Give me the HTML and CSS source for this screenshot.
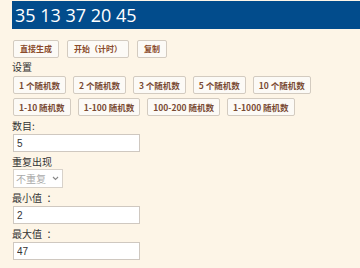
FILE: index.html
```html
<!DOCTYPE html>
<html>
	<head>
		<title>随机数生成</title>
		<link rel="stylesheet" href="styles.css">
	</head>
	<body>
		<div id="result">35 13 37 20 45</div>

		<div class="tools">
			<button class="btn">直接生成</button>
			<button class="btn">开始（计时）</button>
			<button class="btn">复制</button>
		</div>

		<div class="label">设置</div>
		<div class="presets">
			<button class="btn">1 个随机数</button>
			<button class="btn">2 个随机数</button>
			<button class="btn">3 个随机数</button>
			<button class="btn">5 个随机数</button>
			<button class="btn">10 个随机数</button>
		</div>
		<div class="presets">
			<button class="btn">1-10 随机数</button>
			<button class="btn">1-100 随机数</button>
			<button class="btn">100-200 随机数</button>
			<button class="btn">1-1000 随机数</button>
		</div>

		<div class="label">数目:</div>
		<input class="field" type="text" value="5">

		<div class="label">重复出现</div>
		<div class="select"><span>不重复</span>
			<svg width="7" height="5" viewBox="0 0 7 5"><path d="M1 1 L3.5 3.5 L6 1" fill="none" stroke="#888" stroke-width="1.2"/></svg>
		</div>

		<div class="label">最小值 &nbsp;：</div>
		<input class="field" type="text" value="2">

		<div class="label">最大值 &nbsp;：</div>
		<input class="field" type="text" value="47">
	</body>
</html>
```

FILE: styles.css
```css
body {
	margin: 0;
	padding: 1px 0 0 12px;
	background-color: #fdf5e7;
	font-family: "Noto Sans CJK SC", "Open Sans", sans-serif;
	color: #333;
}

/* big number bar on top */
#result {
	background-color: #024c8c;
	color: white;
	font-family: "Open Sans", "Noto Sans CJK SC", sans-serif;
	font-size: 18px;
	line-height: 28px;
	height: 28px;
	padding-left: 3px;
}

.tools {
	display: flex;
	gap: 8px;
	padding: 11px 0 0 1px;
}

.presets {
	display: flex;
	gap: 7px;
	padding: 3px 0 1px 1px;
}

.btn {
	font-family: "Noto Sans CJK SC", sans-serif;
	font-size: 8px;
	font-weight: bold;
	color: #8a4a2a;
	background-color: #fcfaf6;
	border: 1px solid #d3cbc0;
	border-radius: 2px;
	height: 18px;
	padding: 0 6px;
	line-height: 16px;
}

.presets .btn {
	color: #7a4a33;
	font-size: 8.5px;
	padding: 0 5px;
}

.label {
	font-size: 10px;
	line-height: 13px;
	margin-top: 2px;
}

.field {
	display: block;
	box-sizing: border-box;
	width: 127px;
	height: 18px;
	margin: 2px 0 3px 1px;
	padding: 0 3px;
	border: 1px solid #cfc8c0;
	background: white;
	font-family: "Liberation Sans", sans-serif;
	font-size: 10px;
	color: #333;
	outline: none;
}

.select {
	display: flex;
	align-items: center;
	justify-content: space-between;
	box-sizing: border-box;
	width: 50px;
	height: 19px;
	margin: 1px 0 3px 1px;
	padding: 0 3px 0 2px;
	border: 1px solid #d8d2ca;
	background: white;
	font-size: 10px;
	color: #aaa;
	white-space: nowrap;
}
```
